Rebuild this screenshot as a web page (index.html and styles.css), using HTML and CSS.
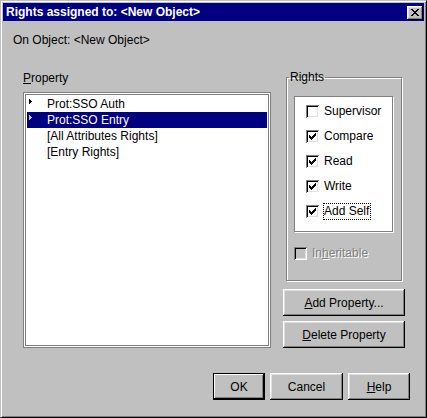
FILE: index.html
```html
<!DOCTYPE html>
<html lang="en">
<head>
    <meta charset="UTF-8">
    <title>Rights assigned to: &lt;New Object&gt;</title>
    <link rel="stylesheet" href="styles.css">
</head>
<body>
    <div class="window">
        <div class="titlebar">
            <span class="title">Rights assigned to: &lt;New Object&gt;</span>
            <button class="close" title="Close">
                <svg width="8" height="7" viewBox="0 0 8 7"><path d="M0 0h2v1h-2zM6 0h2v1h-2zM1 1h2v1h-2zM5 1h2v1h-2zM2 2h4v1h-4zM3 3h2v1h-2zM2 4h4v1h-4zM1 5h2v1h-2zM5 5h2v1h-2zM0 6h2v1h-2zM6 6h2v1h-2z" fill="#000"/></svg>
            </button>
        </div>

        <div class="dialog">
            <div class="target">On Object: &lt;New Object&gt;</div>

            <div class="panes">
                <div class="property-pane">
                    <div class="label"><u>P</u>roperty</div>
                    <ul class="property-list">
                        <li><span class="slot"><svg class="marker" width="3" height="5" viewBox="0 0 3 5"><path d="M0 0h1v5h-1zM1 1h1v3h-1zM2 2h1v1h-1z"/></svg></span>Prot:SSO Auth</li>
                        <li class="selected"><span class="slot"><svg class="marker" width="3" height="5" viewBox="0 0 3 5"><path d="M0 0h1v5h-1zM1 1h1v3h-1zM2 2h1v1h-1z"/></svg></span>Prot:SSO Entry</li>
                        <li><span class="slot"></span>[All Attributes Rights]</li>
                        <li><span class="slot"></span>[Entry Rights]</li>
                    </ul>
                </div>

                <div class="rights-pane">
                    <fieldset class="rights">
                        <legend>Rights</legend>
                        <div class="rights-list">
                            <div class="check-row">
                                <span class="checkbox"></span>
                                <span class="check-label">Supervisor</span>
                            </div>
                            <div class="check-row">
                                <span class="checkbox"><svg width="13" height="13" viewBox="0 0 13 13"><path d="M9 3h1v1h-1zM8 4h2v1h-2zM3 5h1v1h-1zM7 5h3v1h-3zM3 6h2v1h-2zM6 6h3v1h-3zM3 7h5v1h-5zM4 8h3v1h-3zM5 9h1v1h-1z"/></svg></span>
                                <span class="check-label">Compare</span>
                            </div>
                            <div class="check-row">
                                <span class="checkbox"><svg width="13" height="13" viewBox="0 0 13 13"><path d="M9 3h1v1h-1zM8 4h2v1h-2zM3 5h1v1h-1zM7 5h3v1h-3zM3 6h2v1h-2zM6 6h3v1h-3zM3 7h5v1h-5zM4 8h3v1h-3zM5 9h1v1h-1z"/></svg></span>
                                <span class="check-label">Read</span>
                            </div>
                            <div class="check-row">
                                <span class="checkbox"><svg width="13" height="13" viewBox="0 0 13 13"><path d="M9 3h1v1h-1zM8 4h2v1h-2zM3 5h1v1h-1zM7 5h3v1h-3zM3 6h2v1h-2zM6 6h3v1h-3zM3 7h5v1h-5zM4 8h3v1h-3zM5 9h1v1h-1z"/></svg></span>
                                <span class="check-label">Write</span>
                            </div>
                            <div class="check-row">
                                <span class="checkbox"><svg width="13" height="13" viewBox="0 0 13 13"><path d="M9 3h1v1h-1zM8 4h2v1h-2zM3 5h1v1h-1zM7 5h3v1h-3zM3 6h2v1h-2zM6 6h3v1h-3zM3 7h5v1h-5zM4 8h3v1h-3zM5 9h1v1h-1z"/></svg></span>
                                <span class="check-label focused">Add Self</span>
                            </div>
                        </div>
                        <div class="check-row inherit">
                            <span class="checkbox disabled"></span>
                            <span class="check-label disabled">In<u>h</u>eritable</span>
                        </div>
                    </fieldset>
                    <button class="btn wide"><u>A</u>dd Property...</button>
                    <button class="btn wide"><u>D</u>elete Property</button>
                </div>
            </div>

            <div class="actions">
                <button class="btn default ok">OK</button>
                <button class="btn cancel">Cancel</button>
                <button class="btn help"><u>H</u>elp</button>
            </div>
        </div>
    </div>
</body>
</html>
```

FILE: styles.css
```css
body {
    margin: 0;
    font-family: "Liberation Sans", Arial, sans-serif;
    font-size: 12px;
    color: #000;
    background: #c0c0c0;
}

/* dialog frame */
.window {
    width: 427px;
    height: 418px;
    box-sizing: border-box;
    background: #c0c0c0;
    border: 1px solid;
    border-color: #c0c0c0 #000 #000 #c0c0c0;
    box-shadow: inset 1px 1px #fff, inset -1px -1px #808080;
    padding: 2px;
    display: flex;
    flex-direction: column;
}

.titlebar {
    height: 18px;
    flex: none;
    background: #000080;
    color: #fff;
    display: flex;
    justify-content: space-between;
    align-items: flex-start;
    padding: 0 1px 0 3px;
}

.title {
    font-weight: bold;
    line-height: 18px;
    white-space: nowrap;
}

.close {
    width: 16px;
    height: 14px;
    margin-top: 3px;
    padding: 0;
    border: none;
    background: #c0c0c0;
    box-shadow: inset -1px -1px #000, inset 1px 1px #fff, inset -2px -2px #808080, inset 2px 2px #dfdfdf;
    display: flex;
    align-items: center;
    justify-content: center;
}

.close svg {
    display: block;
    margin: 0 1px 1px 0;
}

.dialog {
    flex: 1;
    padding: 12px 14px 0 10px;
}

.target {
    line-height: 14px;
}

.panes {
    display: flex;
    gap: 12px;
    margin: 23px 0 0 10px;
}

/* property list */
.property-pane {
    width: 248px;
}

.label {
    line-height: 14px;
    margin: 1px 0 7px 0;
}

.property-list {
    list-style: none;
    margin: 0;
    padding: 3px;
    height: 256px;
    box-sizing: border-box;
    background: #fff;
    border: 1px solid #808080;
    box-shadow: inset 0 0 0 1px #fff, inset 0 0 0 2px #808080;
}

.property-list li {
    height: 16px;
    line-height: 16px;
    display: flex;
    white-space: nowrap;
}

.property-list .slot {
    width: 20px;
    flex: none;
}

.marker {
    display: block;
    margin: 3px 0 0 2px;
    fill: #000;
}

.property-list .selected {
    background: #000080;
    color: #fff;
}

.property-list .selected .marker {
    fill: #c0c0c0;
}

/* rights group */
.rights-pane {
    width: 122px;
    display: flex;
    flex-direction: column;
}

.rights {
    height: 211px;
    box-sizing: border-box;
    min-width: 0;
    margin: 0 3px 8px 3px;
    padding: 12px 0 0 2px;
    border: 1px solid #808080;
    box-shadow: inset 1px 1px #fff, 1px 1px #fff;
}

.rights legend {
    padding: 0 1px;
    line-height: 14px;
}

.rights-list {
    width: 99px;
    height: 136px;
    box-sizing: border-box;
    margin-left: 5px;
    padding: 2px 0 0 11px;
    background: #fff;
    border: 1px solid #808080;
    box-shadow: 1px 1px #fff;
}

.check-row {
    display: flex;
    align-items: center;
    height: 25px;
}

.checkbox {
    width: 13px;
    height: 13px;
    flex: none;
    background: #fff;
    box-shadow: inset 1px 1px #808080, inset -1px -1px #fff, inset 2px 2px #000, inset -2px -2px #dfdfdf;
}

.checkbox svg {
    display: block;
}

.check-label {
    margin-left: 4px;
    padding-right: 1px;
    line-height: 15px;
    border: 1px solid transparent;
    white-space: nowrap;
}

.check-label.focused {
    border: 1px dotted #000;
}

.inherit {
    height: 13px;
    margin: 15px 0 0 5px;
}

.checkbox.disabled {
    background: #c0c0c0;
}

.check-label.disabled {
    margin-left: 4px;
    color: #808080;
    text-shadow: 1px 1px 0 #fff;
}

/* push buttons */
.btn {
    font-family: "Liberation Sans", Arial, sans-serif;
    font-size: 12px;
    color: #000;
    height: 27px;
    padding: 0;
    border: none;
    background: #c0c0c0;
    box-shadow: inset -1px -1px #000, inset 1px 1px #fff, inset -2px -2px #808080, inset 2px 2px #dfdfdf;
}

.btn.wide {
    width: 122px;
}

.btn.wide + .btn.wide {
    margin-top: 5px;
}

.btn.default {
    border: 1px solid #000;
    box-shadow: inset -1px -1px #000, inset 1px 1px #fff, inset -2px -2px #808080;
}

.actions {
    display: flex;
    justify-content: flex-end;
    gap: 5px;
    margin-top: 25px;
}

.ok {
    width: 52px;
}

.cancel {
    width: 73px;
}

.help {
    width: 62px;
}
```
